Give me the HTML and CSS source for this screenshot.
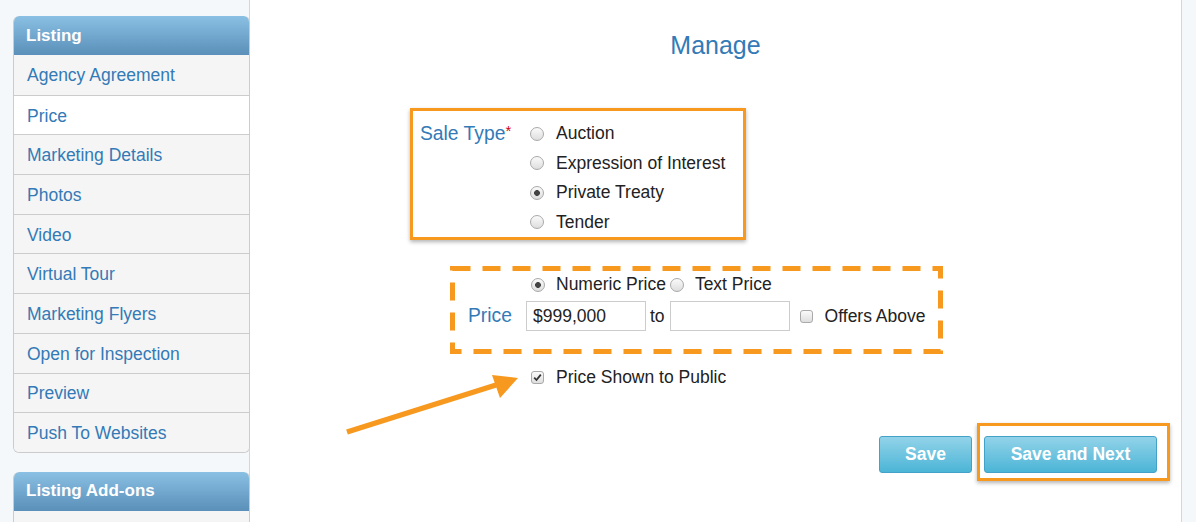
FILE: index.html
```html
<!DOCTYPE html>
<html lang="en">
<head>
<meta charset="utf-8">
<title>Manage - Price</title>
<link rel="stylesheet" href="styles.css">
</head>
<body>
<div class="page">
  <aside class="sidebar">
    <div class="panel">
      <div class="panel-head">Listing</div>
      <ul class="nav">
        <li><a href="#">Agency Agreement</a></li>
        <li class="active"><a href="#">Price</a></li>
        <li><a href="#">Marketing Details</a></li>
        <li><a href="#">Photos</a></li>
        <li><a href="#">Video</a></li>
        <li><a href="#">Virtual Tour</a></li>
        <li><a href="#">Marketing Flyers</a></li>
        <li><a href="#">Open for Inspection</a></li>
        <li><a href="#">Preview</a></li>
        <li><a href="#">Push To Websites</a></li>
      </ul>
    </div>
    <div class="panel panel-addons">
      <div class="panel-head">Listing Add-ons</div>
      <ul class="nav">
        <li class="blank"></li>
      </ul>
    </div>
  </aside>

  <main class="main">
    <h1 class="title">Manage</h1>

    <div class="sale-box">
      <div class="field-label">Sale Type<span class="req">*</span></div>
      <div class="options">
        <label class="opt"><input type="radio" name="sale" class="radio"><span>Auction</span></label>
        <label class="opt"><input type="radio" name="sale" class="radio"><span>Expression of Interest</span></label>
        <label class="opt"><input type="radio" name="sale" class="radio" checked><span>Private Treaty</span></label>
        <label class="opt"><input type="radio" name="sale" class="radio"><span>Tender</span></label>
      </div>
    </div>

    <div class="price-box">
      <svg class="dash-frame" width="493" height="88" viewBox="0 0 493 88" aria-hidden="true">
        <rect x="2.5" y="2.5" width="488" height="83" fill="none" stroke="#f7981f" stroke-width="5" stroke-dasharray="18 12"/>
      </svg>
      <div class="price-kind">
        <label class="opt-inline"><input type="radio" name="kind" class="radio" checked><span>Numeric Price</span></label>
        <label class="opt-inline second"><input type="radio" name="kind" class="radio"><span>Text Price</span></label>
      </div>
      <div class="price-row">
        <span class="price-label">Price</span>
        <input type="text" class="text-input" value="$999,000">
        <span class="to">to</span>
        <input type="text" class="text-input to-input" value="">
        <span class="check"></span>
        <span class="check-text">Offers Above</span>
      </div>
    </div>

    <div class="public-row">
      <span class="check checked"><svg width="9" height="9" viewBox="0 0 9 9"><path d="M1.2 4.6 L3.5 7 L7.8 1.6" fill="none" stroke="#333" stroke-width="1.8"/></svg></span>
      <span class="check-text">Price Shown to Public</span>
    </div>

    <div class="actions">
      <button class="btn btn-save">Save</button>
      <div class="highlight">
        <button class="btn btn-next">Save and Next</button>
      </div>
    </div>

    <svg class="arrow" width="190" height="75" viewBox="0 0 190 75" aria-hidden="true">
      <line x1="7" y1="62" x2="156" y2="15" stroke="#f7981f" stroke-width="5.5" stroke-linecap="butt"/>
      <polygon points="178,8 152,5 160,28" fill="#f7981f"/>
    </svg>
  </main>

  <div class="gutter"></div>
</div>
</body>
</html>
```

FILE: styles.css
```css
* { box-sizing: border-box; }

html, body {
  margin: 0;
  padding: 0;
  height: 522px;
  overflow: hidden;
}

body {
  background: #f4f8fb;
  font-family: "Liberation Sans", Arial, sans-serif;
  color: #222;
}

.page {
  display: flex;
  align-items: stretch;
  height: 522px;
}

/* Sidebar */
.sidebar {
  width: 237px;
  margin-left: 13px;
  margin-right: -1px;
  padding-top: 16px;
  position: relative;
  z-index: 1;
  flex: none;
}

.panel {
  border-radius: 6px;
  overflow: hidden;
  border: 1px solid #ccc;
  border-top: none;
  background: #f5f5f5;
}

.panel-head {
  height: 39px;
  padding-left: 13px;
  display: flex;
  align-items: center;
  color: #fff;
  font-weight: bold;
  font-size: 17px;
  background: linear-gradient(#8ac0e3, #5a90b9);
  margin: 0 -1px;
  border-radius: 6px 6px 0 0;
}

.nav {
  list-style: none;
  margin: 0;
  padding: 0;
}

.nav li {
  height: 39.7px;
  display: flex;
  align-items: center;
  padding-left: 13px;
  border-top: 1px solid #ccc;
  background: #f5f5f5;
}

.nav li:first-child { border-top: none; }

.nav li.active { background: #fff; }

.nav a {
  color: #337ab7;
  text-decoration: none;
  font-size: 17.5px;
  position: relative;
  top: 1px;
}

.panel-addons {
  margin-top: 19px;
  border-bottom: none;
  border-radius: 6px 6px 0 0;
}

.panel-addons .nav li.blank { height: 20px; }

/* Main */
.main {
  width: 933px;
  flex: none;
  background: #fff;
  border-left: 1px solid #d6d6d6;
  border-right: 1px solid #d6d6d6;
  position: relative;
  display: flex;
  flex-direction: column;
}

.title {
  margin: 31px 0 0;
  text-align: center;
  font-weight: normal;
  font-size: 25px;
  line-height: 28px;
  color: #337ab7;
}

.field-label {
  color: #337ab7;
  font-size: 19.3px;
}

.req {
  color: #d0021b;
  font-size: 15px;
  vertical-align: top;
  position: relative;
  top: -3px;
}

.sale-box {
  margin: 49px 0 0 160px;
  width: 336px;
  height: 132px;
  border: 3px solid #f7981f;
  box-shadow: 0 2px 4px rgba(0, 0, 0, 0.3);
  padding: 8px 0 0 7px;
  display: flex;
}

.sale-box .field-label {
  width: 110px;
  line-height: 30px;
  height: 30px;
}

.options {
  display: flex;
  flex-direction: column;
}

.opt, .opt-inline {
  display: flex;
  align-items: center;
  font-size: 17.5px;
  color: #222;
}

.opt { height: 30px; }

.radio {
  appearance: none;
  -webkit-appearance: none;
  margin: 0 12px 0 0;
  width: 14px;
  height: 14px;
  border-radius: 50%;
  border: 1px solid #a9a9a9;
  background: linear-gradient(#fafafa, #dedede);
  flex: none;
}

.radio:checked {
  background: radial-gradient(circle, #444 0, #444 2.6px, transparent 3.2px), linear-gradient(#fafafa, #dedede);
}

/* Price box */
.price-box {
  position: relative;
  margin: 26px 0 0 200px;
  width: 493px;
  height: 88px;
  padding: 8px 0 0 18px;
}

.dash-frame {
  position: absolute;
  left: 0;
  top: 0;
}

.price-kind {
  display: flex;
  height: 21px;
  padding-left: 63px;
}

.opt-inline.second { margin-left: 4px; }
.opt-inline .radio { margin-right: 11px; }

.price-row {
  display: flex;
  align-items: center;
  margin-top: 6px;
  height: 30px;
}

.price-label {
  color: #337ab7;
  font-size: 19.3px;
  width: 58px;
  flex: none;
}

.text-input {
  width: 120px;
  height: 30px;
  border: 1px solid #ccc;
  padding: 0 6px;
  font-family: inherit;
  font-size: 17.5px;
  color: #222;
  flex: none;
  outline: none;
}

.to {
  font-size: 17.5px;
  margin: 0 5px 0 4px;
}

.to-input { margin-right: 10px; }

.check {
  width: 13px;
  height: 13px;
  border-radius: 3px;
  border: 1px solid #a9a9a9;
  background: linear-gradient(#fafafa, #dedede);
  flex: none;
  display: flex;
  align-items: center;
  justify-content: center;
  margin-right: 12px;
}

.check-text {
  font-size: 17.5px;
  color: #222;
}

.public-row {
  display: flex;
  align-items: center;
  height: 20px;
  margin: 13px 0 0 281px;
}

/* Actions */
.actions {
  display: flex;
  justify-content: flex-end;
  align-items: flex-start;
  margin-top: 36px;
  padding-right: 11px;
}

.btn {
  height: 37px;
  border: 1px solid #44a2c8;
  border-radius: 3px;
  background: linear-gradient(#92d3e9, #4cb5d6);
  color: #fff;
  font-family: inherit;
  font-weight: bold;
  font-size: 17.5px;
  padding: 0;
}

.btn-save {
  width: 93px;
  margin-top: 13px;
  margin-right: 5px;
}

.highlight {
  border: 3px solid #f7981f;
  padding: 10px 10px 5px 4px;
  box-shadow: 0 2px 4px rgba(0, 0, 0, 0.3);
}

.btn-next { width: 173px; display: block; }

.arrow {
  position: absolute;
  left: 90px;
  top: 370px;
}

.gutter {
  flex: 1;
  background: #f4f8fb;
}
```
